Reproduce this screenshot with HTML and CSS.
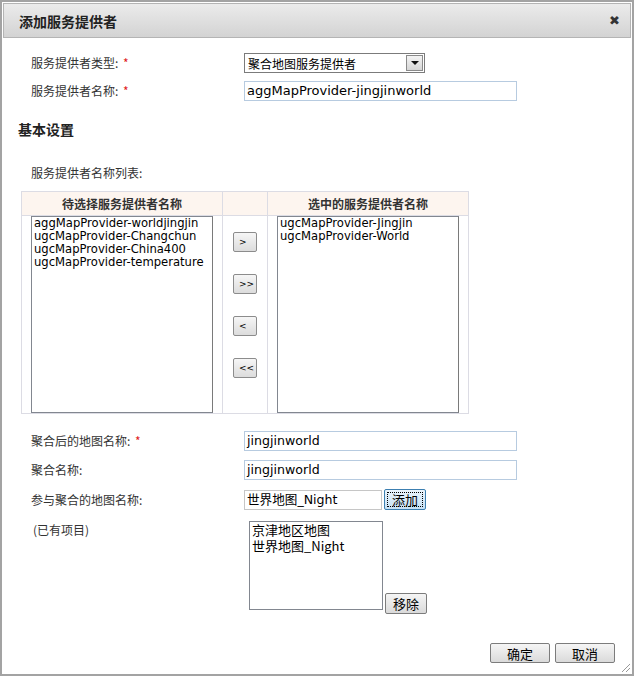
FILE: index.html
```html
<!DOCTYPE html>
<html lang="zh-CN">
<head>
    <meta charset="UTF-8">
    <title>添加服务提供者</title>
    <link rel="stylesheet" href="styles.css">
</head>
<body>
    <div class="dialog">
        <div class="dialog-title">
            <span>添加服务提供者</span>
            <span class="close">&#10006;</span>
        </div>

        <div class="form-grid top-form">
            <label>服务提供者类型: <em>*</em></label>
            <div class="combo">
                <span>聚合地图服务提供者</span>
                <span class="combo-arrow"></span>
            </div>
            <label>服务提供者名称: <em>*</em></label>
            <div class="text-input wide">aggMapProvider-jingjinworld</div>
        </div>

        <h3 class="section">基本设置</h3>

        <p class="list-caption">服务提供者名称列表:</p>

        <table class="picker">
            <tr>
                <th class="col-side">待选择服务提供者名称</th>
                <th class="col-mid"></th>
                <th class="col-side">选中的服务提供者名称</th>
            </tr>
            <tr>
                <td class="list-cell">
                    <div class="listbox">
                        <div>aggMapProvider-worldjingjin</div>
                        <div>ugcMapProvider-Changchun</div>
                        <div>ugcMapProvider-China400</div>
                        <div>ugcMapProvider-temperature</div>
                    </div>
                </td>
                <td class="btn-cell">
                    <button class="move-btn">&gt;</button>
                    <button class="move-btn">&gt;&gt;</button>
                    <button class="move-btn">&lt;</button>
                    <button class="move-btn">&lt;&lt;</button>
                </td>
                <td class="list-cell">
                    <div class="listbox">
                        <div>ugcMapProvider-Jingjin</div>
                        <div>ugcMapProvider-World</div>
                    </div>
                </td>
            </tr>
        </table>

        <div class="form-grid bottom-form">
            <label>聚合后的地图名称: <em>*</em></label>
            <div class="text-input wide">jingjinworld</div>
            <label>聚合名称:</label>
            <div class="text-input wide">jingjinworld</div>
            <label>参与聚合的地图名称:</label>
            <div class="inline">
                <div class="text-input short">世界地图_Night</div>
                <button class="btn focused">添加</button>
            </div>
        </div>

        <div class="items-row">
            <span class="items-label">(已有项目)</span>
            <div class="items-box">
                <div>京津地区地图</div>
                <div>世界地图_Night</div>
            </div>
            <button class="btn">移除</button>
        </div>

        <div class="dialog-footer">
            <button class="btn footer-btn">确定</button>
            <button class="btn footer-btn">取消</button>
        </div>

        <span class="grip"></span>
    </div>
</body>
</html>
```

FILE: styles.css
```css
/* Basic reset */
* {
    margin: 0;
    padding: 0;
    box-sizing: border-box;
}

body {
    background: #fff;
    font-family: "DejaVu Sans", "Noto Sans CJK SC", sans-serif;
    font-size: 12px;
    color: #333;
}

/* Dialog frame */
.dialog {
    position: relative;
    width: 634px;
    height: 676px;
    border: 2px solid #a3a3a3;
    background: #fff;
}

.dialog-title {
    height: 35px;
    margin: 1px 1px 0;
    border: 1px solid #b4b4b4;
    background: linear-gradient(#ebebeb, #d3d3d3);
    display: flex;
    align-items: center;
    justify-content: space-between;
    padding: 0 10px 0 15px;
    font-family: "Noto Sans CJK SC", sans-serif;
    font-weight: bold;
    font-size: 14px;
    color: #222;
}

.close {
    font-size: 13px;
    color: #333;
    font-family: "DejaVu Sans", sans-serif;
}

/* Form rows */
.form-grid {
    display: grid;
    grid-template-columns: 213px auto;
    row-gap: 8px;
    padding-left: 29px;
    align-items: center;
}

.form-grid label {
    font-family: "Noto Sans CJK SC", sans-serif;
    font-size: 12px;
    color: #333;
    line-height: 20px;
}

.form-grid em {
    font-style: normal;
    color: #e02020;
    margin-left: 2px;
}

.top-form {
    margin-top: 15px;
}

.combo {
    width: 181px;
    height: 20px;
    border: 1px solid #7b7b7b;
    display: flex;
    align-items: center;
    justify-content: space-between;
    padding-left: 3px;
    font-family: "Noto Sans CJK SC", sans-serif;
    font-size: 12px;
    color: #000;
}

.combo-arrow {
    position: relative;
    width: 17px;
    height: 16px;
    margin-right: 1px;
    border: 1px solid #8a8a8a;
    background: linear-gradient(#f4f4f4, #d6d6d6);
}

.combo-arrow::after {
    content: "";
    position: absolute;
    left: 4px;
    top: 5px;
    border-left: 4px solid transparent;
    border-right: 4px solid transparent;
    border-top: 4px solid #111;
}

.text-input {
    height: 20px;
    border: 1px solid #b7cbe0;
    padding-left: 2px;
    line-height: 18px;
    font-size: 13px;
    color: #000;
    font-family: "DejaVu Sans", "Noto Sans CJK SC", sans-serif;
    white-space: nowrap;
}

.text-input.wide {
    width: 273px;
}

.text-input.short {
    width: 138px;
    border-color: #c6c6c6;
}

.inline {
    display: flex;
    align-items: center;
    gap: 2px;
}

/* Section heading */
.section {
    margin: 18px 0 0 16px;
    font-family: "Noto Sans CJK SC", sans-serif;
    font-size: 14px;
    font-weight: bold;
    color: #222;
    line-height: 20px;
}

.list-caption {
    margin: 25px 0 0 29px;
    font-family: "Noto Sans CJK SC", sans-serif;
    line-height: 18px;
}

/* Provider picker table */
.picker {
    margin: 9px 0 0 19px;
    border-collapse: collapse;
    width: 448px;
}

.picker th,
.picker td {
    border: 1px solid #dcdce4;
}

.picker th {
    height: 24px;
    background: #fdf5ef;
    font-family: "Noto Sans CJK SC", sans-serif;
    font-size: 12px;
    font-weight: bold;
    color: #333;
}

.col-side {
    width: 201px;
}

.col-mid {
    width: 45px;
}

.list-cell {
    padding: 0 9px;
    vertical-align: top;
}

.listbox {
    width: 182px;
    height: 197px;
    border: 1px solid #828790;
    border-right-color: #7a7a7a;
    padding: 0 2px;
    font-size: 11.6px;
    line-height: 13px;
    color: #000;
}

.btn-cell {
    vertical-align: top;
    padding-top: 16px;
    text-align: center;
}

.move-btn {
    display: block;
    width: 24px;
    height: 20px;
    margin: 0 auto 22px;
    border: 1px solid #8c8c8c;
    border-radius: 2px;
    background: linear-gradient(#f6f6f6, #dcdcdc);
    font-family: "DejaVu Sans", sans-serif;
    font-size: 9px;
    color: #000;
    overflow: hidden;
    white-space: nowrap;
    padding-left: 5px;
    text-align: left;
}

/* Generic buttons */
.btn {
    height: 21px;
    border: 1px solid #7c7c7c;
    border-radius: 2px;
    background: linear-gradient(#f5f5f5, #dadada);
    font-family: "Noto Sans CJK SC", sans-serif;
    font-size: 13px;
    color: #000;
    padding: 0 6px;
}

.btn.focused {
    border-color: #3c7fb1;
    background: linear-gradient(#eaf4fc, #c6e0f4);
    outline: 1px dotted #000;
    outline-offset: -4px;
    width: 42px;
}

.bottom-form {
    margin-top: 17px;
    row-gap: 9px;
}

.bottom-form .text-input {
    font-size: 12.6px;
}

/* Existing items */
.items-row {
    display: flex;
    align-items: flex-end;
    margin-top: 11px;
    padding-left: 31px;
}

.items-label {
    align-self: flex-start;
    width: 216px;
    font-family: "Noto Sans CJK SC", sans-serif;
    line-height: 18px;
}

.items-box {
    width: 134px;
    height: 89px;
    border: 1px solid #828790;
    padding: 0 2px;
    font-family: "Noto Sans CJK SC", sans-serif;
    font-size: 13px;
    line-height: 16px;
    color: #000;
}

.items-row .btn {
    width: 42px;
    margin-left: 2px;
    margin-bottom: -4px;
}

/* Footer */
.dialog-footer {
    position: absolute;
    right: 17px;
    bottom: 11px;
    display: flex;
    gap: 5px;
}

.footer-btn {
    width: 60px;
    height: 20px;
}

.grip {
    position: absolute;
    right: 2px;
    bottom: 2px;
    width: 10px;
    height: 10px;
    background: repeating-linear-gradient(135deg, transparent 0 2px, #999 2px 3px);
    clip-path: polygon(100% 0, 100% 100%, 0 100%);
}
```
